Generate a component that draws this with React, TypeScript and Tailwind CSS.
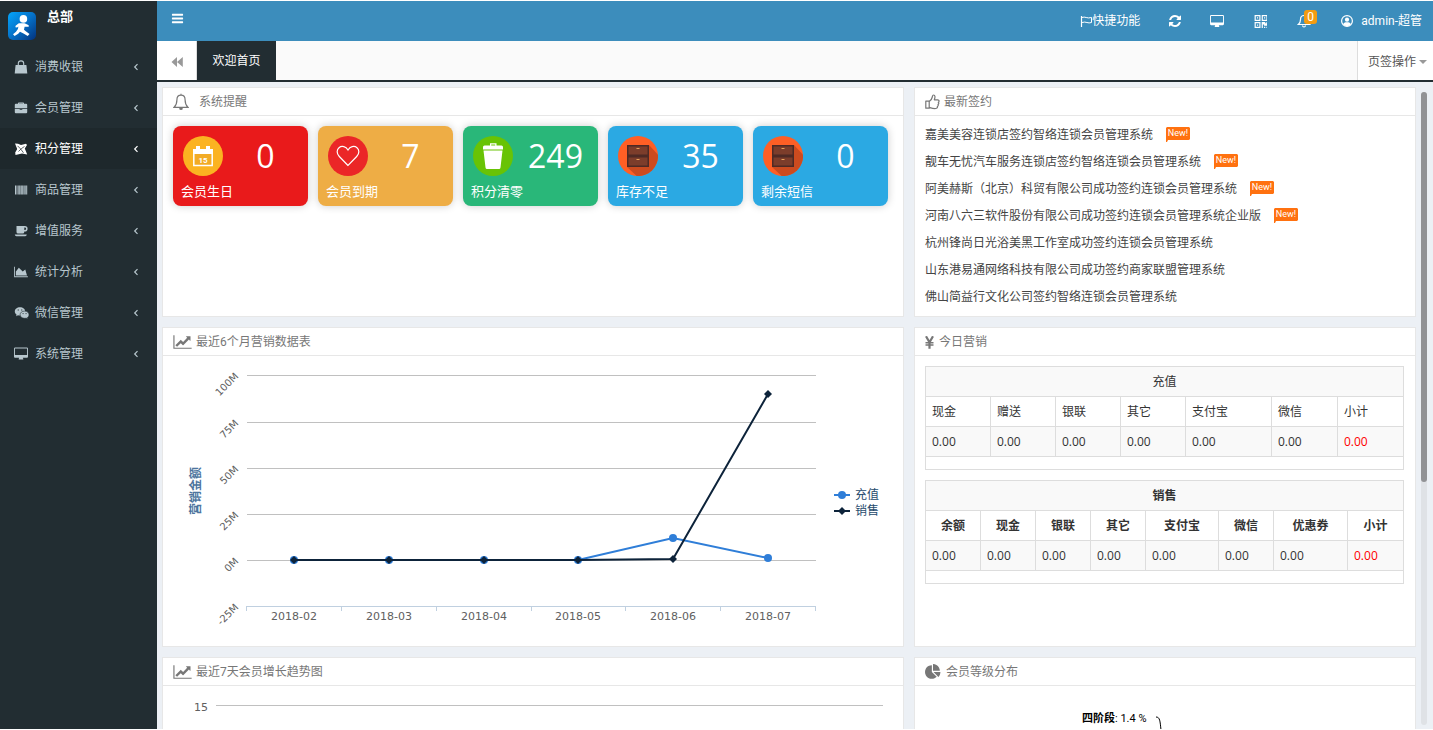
import type { ReactNode } from "react";

const PATHS = {
  bars: "M1664 1344v128q0 26-19 45t-45 19h-1408q-26 0-45-19t-19-45v-128q0-26 19-45t45-19h1408q26 0 45 19t19 45zm0-512v128q0 26-19 45t-45 19h-1408q-26 0-45-19t-19-45v-128q0-26 19-45t45-19h1408q26 0 45 19t19 45zm0-512v128q0 26-19 45t-45 19h-1408q-26 0-45-19t-19-45v-128q0-26 19-45t45-19h1408q26 0 45 19t19 45z",
  refresh: "M1639 1056q0 5-1 7-64 268-268 434.5t-478 166.5q-146 0-282.5-55t-243.5-157l-129 129q-19 19-45 19t-45-19-19-45v-448q0-26 19-45t45-19h448q26 0 45 19t19 45-19 45l-137 137q71 66 161 102t187 36q134 0 250-65t186-179q11-17 53-117 8-23 30-23h192q13 0 22.5 9.5t9.5 22.5zm25-800v448q0 26-19 45t-45 19h-448q-26 0-45-19t-19-45 19-45l138-138q-148-137-349-137-134 0-250 65t-186 179q-11 17-53 117-8 23-30 23h-199q-13 0-22.5-9.5t-9.5-22.5v-7q65-268 270-434.5t480-166.5q146 0 284 55.5t245 156.5l130-129q19-19 45-19t45 19 19 45z",
  desktop: "M1792 992v-832q0-13-9.5-22.5t-22.5-9.5h-1600q-13 0-22.5 9.5t-9.5 22.5v832q0 13 9.5 22.5t22.5 9.5h1600q13 0 22.5-9.5t9.5-22.5zm128-832v1088q0 66-47 113t-113 47h-544q0 37 16 77.5t32 71 16 43.5q0 26-19 45t-45 19h-512q-26 0-45-19t-19-45q0-14 16-44t32-70 16-78h-544q-66 0-113-47t-47-113v-1088q0-66 47-113t113-47h1600q66 0 113 47t47 113z",
  qrcode: "M576 1152v128h-128v-128h128zm0-768v128h-128v-128h128zm768 0v128h-128v-128h128zm-1024 1023h384v-383h-384v383zm0-767h384v-384h-384v384zm768 0h384v-384h-384v384zm-256 256v640h-640v-640h640zm512 512v128h-128v-128h128zm256 0v128h-128v-128h128zm0-512v384h-384v-128h-128v384h-128v-640h384v128h128v-128h128zm-768-768v640h-640v-640h640zm768 0v640h-640v-640h640z",
  line: "M2048 1536v128h-2048v-1536h128v1408h1920zm-128-1248v435q0 21-19.5 29.5t-35.5-7.5l-121-121-633 633q-10 10-23 10t-23-10l-233-233-416 416-192-192 585-585q10-10 23-10t23 10l233 233 464-464-121-121q-16-16-7.5-35.5t29.5-19.5h435q14 0 23 9t9 23z",
  area: "M2048 1536v128h-2048v-1536h128v1408h1920zm-384-1024l256 896h-1664v-576l448-576 576 576z",
  pie: "M768 890l546 546q-106 108-247.5 168t-298.5 60q-209 0-385.5-103t-279.5-279.5-103-385.5 103-385.5 279.5-279.5 385.5-103v762zm187 6h773q0 157-60 298.5t-168 247.5zm709-128h-768v-768q209 0 385.5 103t279.5 279.5 103 385.5z",
};

function Glyph({ d, box = "0 0 1792 1792", className }: { d: string; box?: string; className: string }) {
  return (
    <svg viewBox={box} className={className} fill="currentColor" aria-hidden="true">
      <path d={d} />
    </svg>
  );
}

const bag = (
  <svg viewBox="0 0 14 14" className="h-3.5 w-3.5" aria-hidden="true">
    <path d="M1.600 5h10.800l.9 8.600H.7z" fill="currentColor" />
    <path d="M4.300 7V3.600a2.700 2.700 0 0 1 5.400 0V7" fill="none" stroke="currentColor" strokeWidth="1.100" />
  </svg>
);
const briefcase = (
  <svg viewBox="0 0 14 14" className="h-3.5 w-3.5" fill="currentColor" aria-hidden="true">
    <path d="M4 2.700V2.200q0-.7.7-.7h4.600q.7 0 .7.700v.5h2.200q1 0 1 1V7.200H.8V3.700q0-1 1-1zm1 0h4v-.3H5zM.8 8h4.900v.8h2.600V8h4.900v3.300q0 1-1 1H1.800q-1 0-1-1z" />
  </svg>
);
const points = (
  <svg viewBox="0 0 14 14" className="h-3.5 w-3.5" fill="currentColor" aria-hidden="true">
    <path d="M1 1.500l3 .3 3 1.200 5-1.300 1 1.300-2.200 3.500 2.400 6L8 11.500 1.500 13l-.3-2.500 2-3.500z" />
    <path d="M3.500 3.800l3 3 3 4M10.500 4.500l-3 2-3 3" stroke="#1e282c" strokeWidth=".7" fill="none" />
  </svg>
);
const barcode = (
  <svg viewBox="0 0 14 14" className="h-3.5 w-3.5" fill="currentColor" aria-hidden="true">
    <path d="M1 2.500h1v9H1zM2.500 2.500h.7v9h-.7zM3.700 2.500h1v9h-1zM5.100 2.500h.8v9h-.8zM6.400 2.500h1.400v9H6.400zM8.200 2.500h.8v9h-.8zM9.400 2.500h1.300v9H9.400zM11.100 2.500h.7v9h-.7zM12.200 2.500h1v9h-1z" />
  </svg>
);
const coffee = (
  <svg viewBox="0 0 14 14" className="h-3.5 w-3.5" fill="currentColor" aria-hidden="true">
    <path d="M2.500 2h8.300a2.700 2.700 0 0 1 0 5.600h-.5v.4q0 1.600-1.600 1.600H4.100Q2.500 9.600 2.500 8zm7.800 1.500v2.600h.5a1.300 1.300 0 0 0 0-2.600zM.8 10.600h12q-.2 1.600-1.600 1.600H2.400Q1 12.200.8 10.600z" />
  </svg>
);
const wechat = (
  <svg viewBox="0 0 16 14" className="h-3.5 w-4" aria-hidden="true">
    <path d="M6 1.300C3 1.300.8 3.100.8 5.500c0 1.300.7 2.400 1.800 3.200l-.5 1.600 1.900-1q.9.300 2 .3c3 0 5.200-1.800 5.200-4.100S9 1.300 6 1.300z" fill="currentColor" />
    <path d="M10.600 5.100c-2.700 0-4.500 1.600-4.500 3.600s1.900 3.600 4.500 3.600q.8 0 1.500-.2l1.700.9-.4-1.400c1-.7 1.600-1.700 1.600-2.900 0-2-1.900-3.600-4.400-3.600z" fill="currentColor" stroke="#222d32" strokeWidth=".6" />
    <path d="M3.700 4h1.100M7.200 4h1.100M8.600 7.600h.9M11.600 7.600h.9" stroke="#222d32" strokeWidth="1" />
  </svg>
);

const MENU: { label: string; icon: ReactNode; active?: boolean }[] = [
  { label: "消费收银", icon: bag },
  { label: "会员管理", icon: briefcase },
  { label: "积分管理", icon: points, active: true },
  { label: "商品管理", icon: barcode },
  { label: "增值服务", icon: coffee },
  { label: "统计分析", icon: <Glyph d={PATHS.area} box="0 0 2048 1792" className="h-3 w-3.5" /> },
  { label: "微信管理", icon: wechat },
  { label: "系统管理", icon: <Glyph d={PATHS.desktop} box="0 0 1920 1792" className="h-3.5 w-3.5" /> },
];

function Sidebar() {
  return (
    <aside className="w-[157px] shrink-0 bg-[#222d32]">
      <div className="flex h-[45px] gap-[11px] pl-2">
        <svg viewBox="0 0 28 28" className="mt-[11px] h-7 w-7" aria-hidden="true">
          <defs>
            <linearGradient id="logo" x1="0" y1="0" x2="1" y2="1">
              <stop offset="0" stopColor="#04a5fb" />
              <stop offset=".5" stopColor="#0571c8" />
              <stop offset="1" stopColor="#03317c" />
            </linearGradient>
          </defs>
          <rect width="28" height="28" rx="5" fill="url(#logo)" />
          <circle cx="15.400" cy="6.900" r="3.800" fill="#fff" />
          <path d="M10.800 11.300h5.700l3.800 1.600q1.200.9.200 1.900l-3.900-.1-.6 3 1.800 1.500 3.700 2.900-1.800 2-4.200-2.600-3.500-1.800-1.800 2.100-3.600 2.200-1.600-1.800 3-2.500 1.900-2.700.5-2.600-1.300 1.200-1.700-.4.200-1.500z" fill="#fff" />
        </svg>
        <span className="pt-1.5 text-[13px] leading-5 font-bold text-white">总部</span>
      </div>
      <nav>
        {MENU.map((m) => (
          <a
            key={m.label}
            href="#"
            className={
              m.active
                ? "flex h-[41px] items-center bg-[#1e282c] pr-[18px] pl-3.5 text-white"
                : "flex h-[41px] items-center pr-[18px] pl-3.5 text-[#b8c7ce]"
            }
          >
            <span className="flex w-[21px] items-center">{m.icon}</span>
            <span className="grow">{m.label}</span>
            <svg viewBox="0 0 8 8" className="h-2 w-2" fill="none" stroke="currentColor" strokeWidth="1.200" aria-hidden="true">
              <path d="M6.500 1.200L3.700 4l2.800 2.800" />
            </svg>
          </a>
        ))}
      </nav>
    </aside>
  );
}

function Header() {
  return (
    <header className="flex h-10 shrink-0 items-center justify-between bg-[#3c8dbc] pr-[11px] text-white">
      <button type="button" aria-label="菜单" className="pb-1.5 pl-3.5">
        <Glyph d={PATHS.bars} className="h-[13px] w-[13px]" />
      </button>
      <div className="flex items-center">
        <a href="#" className="flex items-center px-[15px]">
          <svg viewBox="0 0 12 12" className="h-3 w-3" fill="none" stroke="currentColor" aria-hidden="true">
            <path d="M1.500 1v11" strokeWidth="1.200" />
            <path d="M2 2.500c3-1.500 5 1.500 9.500 0v5C8 9 6 6 2 7.500" />
          </svg>
          快捷功能
        </a>
        <button type="button" aria-label="刷新" className="px-3.5">
          <Glyph d={PATHS.refresh} box="128 128 1536 1536" className="h-3 w-3" />
        </button>
        <button type="button" aria-label="全屏" className="px-[15px]">
          <Glyph d={PATHS.desktop} box="0 0 1920 1792" className="h-[13px] w-3.5" />
        </button>
        <button type="button" aria-label="二维码" className="px-[15px]">
          <Glyph d={PATHS.qrcode} box="128 128 1408 1408" className="h-[13px] w-[13px]" />
        </button>
        <button type="button" aria-label="通知" className="relative px-[15px]">
          <svg viewBox="0 0 14 14" className="h-3.5 w-3.5" fill="none" stroke="currentColor" strokeWidth="1.200" aria-hidden="true">
            <path d="M7 1.500c-2.300 0-3.500 1.600-3.500 4 0 2.600-.9 4.100-2.200 5h11.400c-1.300-.9-2.200-2.400-2.200-5 0-2.400-1.200-4-3.500-4zM5.500 11.500q.2 1.500 1.500 1.500t1.500-1.500" />
          </svg>
          <span className="absolute -top-1 left-[22px] h-3.5 rounded-[3px] bg-[#f39c12] px-[3px] text-[12px] leading-3.5">0</span>
        </button>
        <a href="#" className="flex items-center gap-2 pl-[15px]">
          <svg viewBox="0 0 12 12" className="h-3 w-3" aria-hidden="true">
            <circle cx="6" cy="6" r="5.400" fill="none" stroke="currentColor" strokeWidth="1.200" />
            <circle cx="6" cy="4.700" r="2.100" fill="currentColor" />
            <path d="M2 9.500Q2.500 7.400 4.500 7.200h3Q9.500 7.400 10 9.500 8 11.300 6 11.300T2 9.500z" fill="currentColor" />
          </svg>
          admin-超管
        </a>
      </div>
    </header>
  );
}

function TabBar() {
  return (
    <div className="flex h-[41px] shrink-0 border-b-2 border-[#222d32] bg-[#fafafa]">
      <button type="button" aria-label="后退" className="flex w-10 items-center justify-center border-r border-[#ddd] bg-white pt-0.5 text-[#999]">
        <svg viewBox="0 0 12 10" className="h-2.5 w-3" fill="currentColor" aria-hidden="true">
          <path d="M6 0v10L.5 5zM11.800 0v10L6 5z" />
        </svg>
      </button>
      <a href="#" className="flex w-[79px] items-center justify-center bg-[#222d32] text-white">欢迎首页</a>
      <button type="button" className="ml-auto flex items-center gap-[3px] border-l border-[#ddd] bg-white pt-0.5 pr-1.5 pl-2.5 text-[#555]">
        页签操作
        <svg viewBox="0 0 8 4" className="h-1 w-2" fill="#999" aria-hidden="true">
          <path d="M0 0h8L4 4z" />
        </svg>
      </button>
    </div>
  );
}

function Panel({ icon, title, tall, children }: { icon: ReactNode; title: string; tall?: boolean; children: ReactNode }) {
  return (
    <section className={tall ? "h-80 border border-[#e7e7e7] bg-white" : "h-[230px] border border-[#e7e7e7] bg-white"}>
      <h2 className="flex h-7 items-center border-b border-[#e7e7e7] pt-px pl-2.5 text-[#777]">
        {icon}
        {title}
      </h2>
      {children}
    </section>
  );
}

const calendarIcon = (
  <svg viewBox="0 0 40 40" className="h-10 w-10" aria-hidden="true">
    <circle cx="20" cy="20" r="20" fill="#fbb321" />
    <path d="M10 13h3v-3h4v3h6v-3h4v3h3v5H10z" fill="#fff" />
    <path d="M10.800 18v11.500h18.400V18" fill="#f2ab25" stroke="#fff" strokeWidth="1.500" />
    <text x="20" y="27" textAnchor="middle" fontSize="8" fontWeight="bold" fill="#fff">15</text>
  </svg>
);
const heartIcon = (
  <svg viewBox="0 0 40 40" className="h-10 w-10" aria-hidden="true">
    <circle cx="20" cy="20" r="20" fill="#eb2627" />
    <path d="M20 29.500L11.300 20.500c-3-3.200-2.600-6.800-.3-8.800 2.900-2.500 6.900-1.200 9 2.300 2.100-3.500 6.100-4.800 9-2.300 2.300 2 2.700 5.600-.3 8.800z" fill="none" stroke="#fff" strokeWidth="1.200" />
  </svg>
);
const trashIcon = (
  <svg viewBox="0 0 40 40" className="h-10 w-10" aria-hidden="true">
    <circle cx="20" cy="20" r="20" fill="#68c305" />
    <path d="M10 11q0-1.500 1.500-1.500H17V7.200h6.500v2.300h5q1.500 0 1.500 1.500v2.500H10zM18.200 9.500h4V8.400h-4zM10.500 14.500h19l-2 17q-.2 1.500-1.500 1.500H14q-1.300 0-1.500-1.500z" fill="#fff" />
  </svg>
);
const drawerIcon = (
  <svg viewBox="0 0 40 40" className="h-10 w-10" aria-hidden="true">
    <circle cx="20" cy="20" r="20" fill="#ff5f25" />
    <path d="M31 9l9 9.700A20 20 0 0 1 18.700 40L9 31z" fill="#cc4b1f" />
    <path d="M9 9h22v22H9z" fill="#4e2a25" />
    <path d="M10.500 10.500h19v8h-19zM10.500 21.500h19v8h-19z" fill="#7c3d2b" />
    <path d="M18.500 12.500h3M18.500 23.500h3" stroke="#e5a15b" strokeWidth="1.200" />
  </svg>
);

const CARDS = [
  { label: "会员生日", value: "0", icon: calendarIcon, cls: "bg-[#e91a1b]" },
  { label: "会员到期", value: "7", icon: heartIcon, cls: "bg-[#eead45]" },
  { label: "积分清零", value: "249", icon: trashIcon, cls: "bg-[#29b779]" },
  { label: "库存不足", value: "35", icon: drawerIcon, cls: "bg-[#2ba9e3]" },
  { label: "剩余短信", value: "0", icon: drawerIcon, cls: "bg-[#2ba9e3]" },
];

function Cards() {
  return (
    <div className="flex gap-2.5 p-2.5">
      {CARDS.map((c) => (
        <a key={c.label} href="#" className={`block h-20 w-[135px] rounded-lg pt-2.5 text-white shadow-[0_0_8px_rgba(0,0,0,0.2)] ${c.cls}`}>
          <span className="flex items-center pr-1.5 pl-2.5">
            {c.icon}
            <span className="grow pl-1.5 text-center font-['Open_Sans'] text-[32px] leading-10">{c.value}</span>
          </span>
          <span className="block pt-1.5 pl-2 text-[13px] leading-5">{c.label}</span>
        </a>
      ))}
    </div>
  );
}

const NEWS = [
  { text: "嘉美美容连锁店签约智络连锁会员管理系统", fresh: true },
  { text: "靓车无忧汽车服务连锁店签约智络连锁会员管理系统", fresh: true },
  { text: "阿美赫斯（北京）科贸有限公司成功签约连锁会员管理系统", fresh: true },
  { text: "河南八六三软件股份有限公司成功签约连锁会员管理系统企业版", fresh: true },
  { text: "杭州锋尚日光浴美黑工作室成功签约连锁会员管理系统", fresh: false },
  { text: "山东港易通网络科技有限公司成功签约商家联盟管理系统", fresh: false },
  { text: "佛山简益行文化公司签约智络连锁会员管理系统", fresh: false },
];

function News() {
  return (
    <ul className="px-2.5 pt-[5px]">
      {NEWS.map((n) => (
        <li key={n.text} className="flex h-[27px] items-center gap-[13px]">
          <a href="#" className="text-[#444]">{n.text}</a>
          {n.fresh && (
            <svg viewBox="0 0 24 15" className="h-[15px] w-6" role="img" aria-label="New!">
              <path d="M1 0h22l1 1v11l-1 1H2l-1 2H0V1z" fill="#ff7110" />
              <text x="12" y="9" textAnchor="middle" fontSize="9" fill="#fff">New!</text>
            </svg>
          )}
        </li>
      ))}
    </ul>
  );
}

const MONTHS = ["2018-02", "2018-03", "2018-04", "2018-05", "2018-06", "2018-07"];
const TICKS = [
  { label: "100M", y: 19 },
  { label: "75M", y: 66 },
  { label: "50M", y: 112 },
  { label: "25M", y: 158 },
  { label: "0M", y: 204 },
  { label: "-25M", y: 250 },
];
const XS = [131, 226, 321, 415, 510, 605];
const RECHARGE = [204, 204, 204, 204, 182, 202];
const SALES = [204, 204, 204, 204, 203, 38];
const toPoints = (ys: number[]) => ys.map((y, i) => `${XS[i]},${y}`).join(" ");

function SalesChart() {
  return (
    <svg viewBox="0 0 740 290" className="w-full font-['DejaVu_Sans','Noto_Sans_CJK_SC',sans-serif]" role="img" aria-label="最近6个月营销数据表">
      {TICKS.map((t, i) => (
        <g key={t.label}>
          <path d={`M84 ${t.y + 0.5}H653`} stroke={i === 5 ? "#c0d0e0" : "#c0c0c0"} />
          <text transform={`translate(76 ${t.y + 2}) rotate(-45)`} textAnchor="end" fontSize="10" fill="#606060">{t.label}</text>
        </g>
      ))}
      <path d="M83.500 250v5M178.500 250v5M273.500 250v5M368.500 250v5M462.500 250v5M557.500 250v5M652.500 250v5" stroke="#c0d0e0" />
      {MONTHS.map((m, i) => (
        <text key={m} x={XS[i]} y="264" textAnchor="middle" fontSize="11" fill="#606060">{m}</text>
      ))}
      <text transform="translate(37 135) rotate(-90)" textAnchor="middle" fontSize="12" fontWeight="bold" fill="#4d759e">营销金额</text>
      <polyline points={toPoints(RECHARGE)} fill="none" stroke="#2f7ed8" strokeWidth="2" />
      {RECHARGE.map((y, i) => (
        <circle key={i} cx={XS[i]} cy={y} r="4" fill="#2f7ed8" />
      ))}
      <polyline points={toPoints(SALES)} fill="none" stroke="#0d233a" strokeWidth="2" />
      {SALES.map((y, i) => (
        <path key={i} d={`M${XS[i]} ${y - 4}l4 4-4 4-4-4z`} fill="#0d233a" />
      ))}
      <path d="M671 139h16" stroke="#2f7ed8" strokeWidth="2" />
      <circle cx="679" cy="139" r="4" fill="#2f7ed8" />
      <path d="M671 155h16" stroke="#0d233a" strokeWidth="2" />
      <path d="M679 151l4 4-4 4-4-4z" fill="#0d233a" />
      <text x="692" y="143" fontSize="12" fill="#274b6d">充值</text>
      <text x="692" y="159" fontSize="12" fill="#274b6d">销售</text>
    </svg>
  );
}

function TotalsTable({ title, heads, widths, bold }: { title: string; heads: string[]; widths: number[]; bold?: boolean }) {
  const cell = "h-[30px] border border-[#ddd] px-1.5";
  return (
    <table className="mb-2.5 w-full table-fixed border-collapse text-[#333]">
      <colgroup>
        {widths.map((w, i) => (
          <col key={i} style={{ width: `${(w / 478) * 100}%` }} />
        ))}
      </colgroup>
      <thead>
        <tr className="bg-[#f9f9f9]">
          <th colSpan={heads.length} className={`${cell} text-center ${bold ? "font-bold" : "font-normal"}`}>{title}</th>
        </tr>
        <tr>
          {heads.map((h) => (
            <th key={h} className={`${cell} ${bold ? "text-center font-bold" : "text-left font-normal"}`}>{h}</th>
          ))}
        </tr>
      </thead>
      <tbody>
        <tr className="bg-[#f9f9f9] font-['Open_Sans']">
          {heads.map((h, i) => (
            <td key={h} className={i === heads.length - 1 ? `${cell} text-[#f00]` : cell}>0.00</td>
          ))}
        </tr>
        <tr>
          <td colSpan={heads.length} className="h-[13px] border border-[#ddd]" />
        </tr>
      </tbody>
    </table>
  );
}

const lineIcon = <Glyph d={PATHS.line} box="0 0 2048 1792" className="mr-1 h-4 w-[19px]" />;

export default function App() {
  return (
    <div className="flex h-screen overflow-hidden bg-white py-px font-[Roboto,'Noto_Sans_CJK_SC',sans-serif] text-[12px] leading-[18px]">
      <Sidebar />
      <div className="flex min-w-0 grow flex-col bg-[#ecf0f5]">
        <Header />
        <TabBar />
        <div className="flex min-h-0 grow gap-[5px] pl-[5px]">
          <main className="grid min-h-0 min-w-0 grow grid-cols-[742fr_502fr] content-start gap-2.5 overflow-hidden pt-[5px]">
            <Panel
              title="系统提醒"
              icon={
                <svg viewBox="0 0 16 18" className="mr-2.5 h-[18px] w-4" fill="none" stroke="currentColor" strokeWidth="1.200" aria-hidden="true">
                  <path d="M8 2.200C5.300 2.200 3.900 4 3.900 7c0 3.500-.8 5.500-2.800 7.300h13.800C12.900 12.500 12.100 10.500 12.100 7c0-3-1.400-4.800-4.100-4.800zM8 .8v1.400M6.500 15.500h3" />
                  <path d="M6.600 16h2.800" strokeWidth="1.800" />
                </svg>
              }
            >
              <Cards />
            </Panel>
            <Panel
              title="最新签约"
              icon={
                <svg viewBox="0 0 15 16" className="mr-1 h-4 w-[15px]" fill="none" stroke="currentColor" strokeWidth="1.200" strokeLinejoin="round" aria-hidden="true">
                  <path d="M.8 7.200h3.400v7H.8zM4.200 7.600C6 6.500 6.900 4.800 7.300 3c.2-1.100.3-2 1.200-2 1.700 0 1.900 2 .8 4.800h3.400c1.800 0 1.700 2 .6 2.400.8.500.6 2-.3 2.200.5.700.2 1.900-.6 2 .3 1.400-.5 2.100-1.700 2.100-2.700.2-4.500-.5-6.500-1.100" />
                </svg>
              }
            >
              <News />
            </Panel>
            <Panel tall title="最近6个月营销数据表" icon={lineIcon}>
              <SalesChart />
            </Panel>
            <Panel
              tall
              title="今日营销"
              icon={
                <svg viewBox="0 0 9 13" className="mr-[5px] h-[13px] w-[9px]" fill="none" stroke="currentColor" aria-hidden="true">
                  <path d="M1 .3l3.500 6L8 .3M4.500 6v6.700" strokeWidth="2.200" />
                  <path d="M.5 6.700h8M.5 9h8" strokeWidth="1.500" />
                </svg>
              }
            >
              <div className="pt-2.5 pr-[11px] pl-2.5">
                <TotalsTable title="充值" heads={["现金", "赠送", "银联", "其它", "支付宝", "微信", "小计"]} widths={[65, 65, 65, 65, 86, 66, 66]} />
                <TotalsTable bold title="销售" heads={["余额", "现金", "银联", "其它", "支付宝", "微信", "优惠券", "小计"]} widths={[55, 55, 55, 55, 73, 55, 74, 56]} />
              </div>
            </Panel>
            <Panel tall title="最近7天会员增长趋势图" icon={lineIcon}>
              <svg viewBox="0 0 740 290" className="w-full font-['DejaVu_Sans']" role="img" aria-label="最近7天会员增长趋势图">
                <text x="45" y="25" textAnchor="end" fontSize="11" fill="#606060">15</text>
                <path d="M53 19.500h667" stroke="#c0c0c0" />
              </svg>
            </Panel>
            <Panel tall title="会员等级分布" icon={<Glyph d={PATHS.pie} className="mr-[5px] h-4 w-4" />}>
              <svg viewBox="0 0 500 290" className="w-full" role="img" aria-label="会员等级分布">
                <text x="167" y="36" fontSize="11" fill="#000">
                  <tspan fontWeight="bold">四阶段</tspan>: 1.4 %
                </text>
                <path d="M241 31c4 0 4 4 5 13" fill="none" stroke="#000" />
              </svg>
            </Panel>
          </main>
          <div className="mt-2.5 mr-1.5 mb-1 w-1.5 shrink-0 rounded-full bg-[#dfe2e6]">
            <div className="h-[390px] rounded-full bg-[#919295]" />
          </div>
        </div>
      </div>
    </div>
  );
}
